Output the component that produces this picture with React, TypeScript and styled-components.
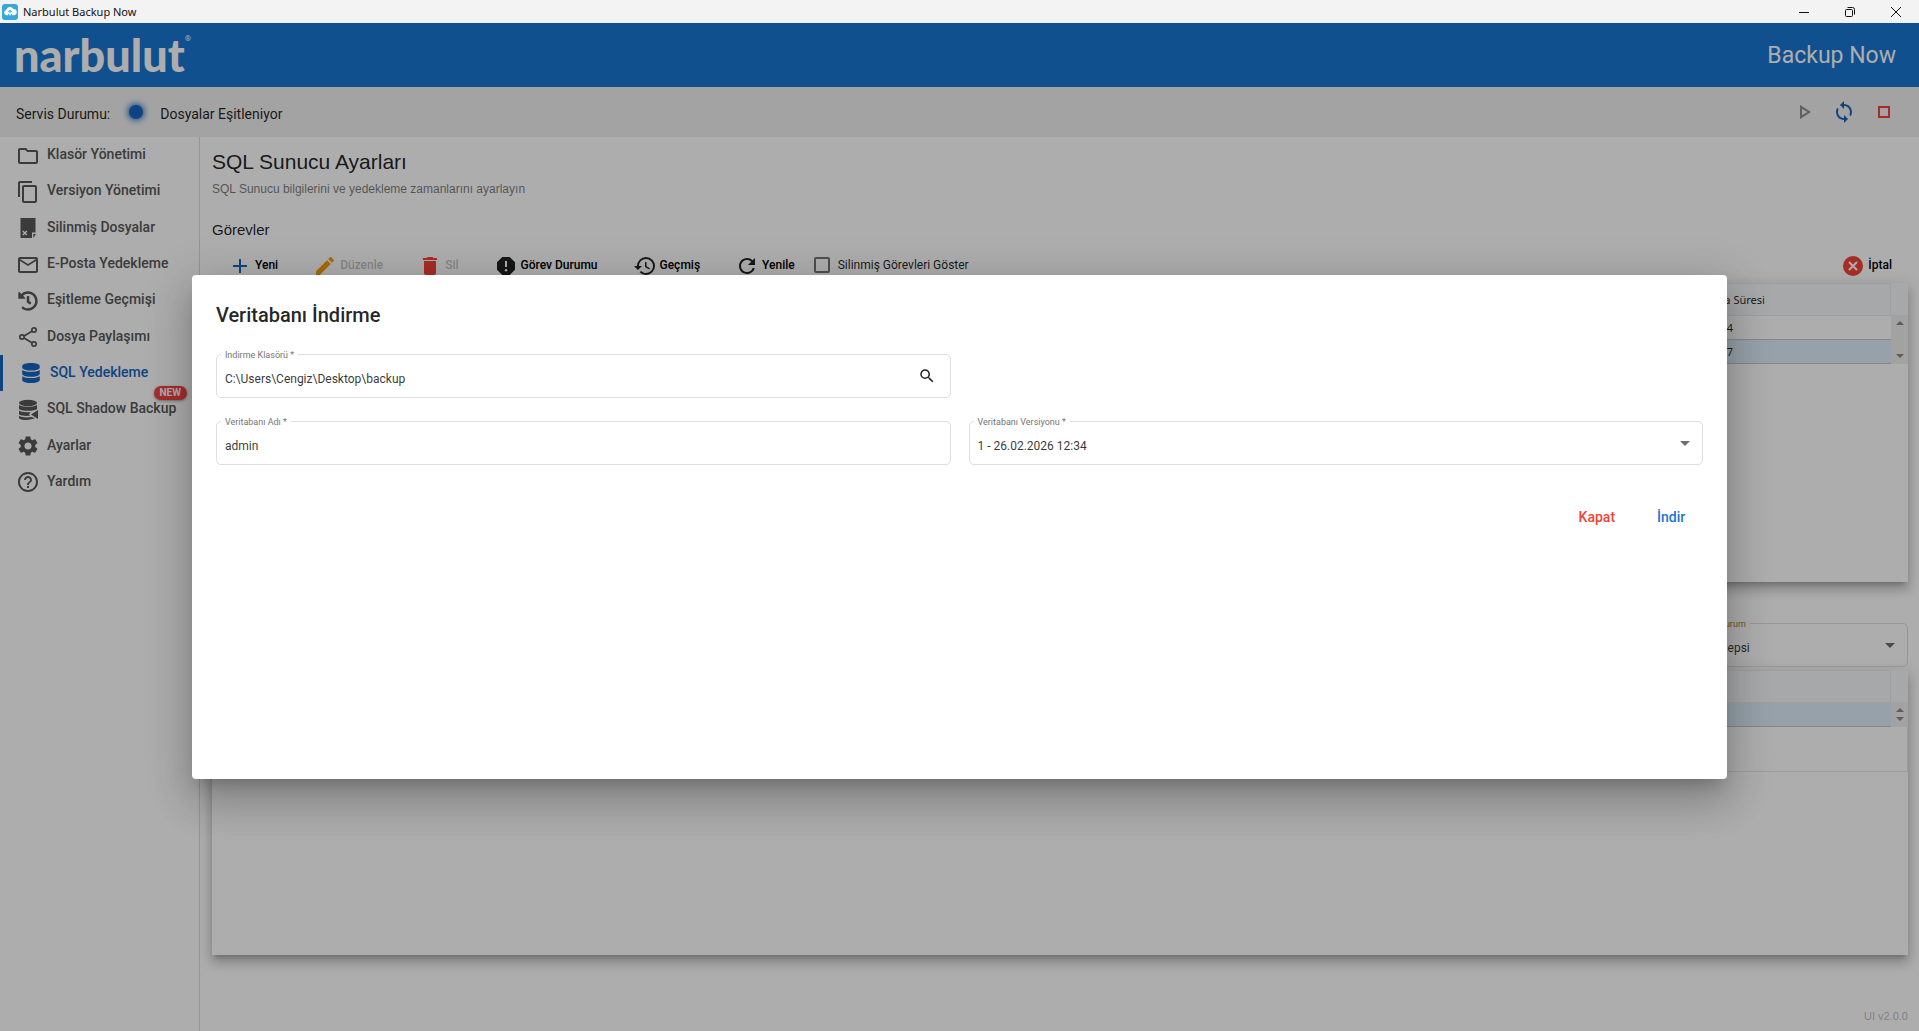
import React from "react";
import styled, { createGlobalStyle, css } from "styled-components";
import {
  MdAdd,
  MdArrowDropDown,
  MdContentCopy,
  MdDelete,
  MdEdit,
  MdHelpOutline,
  MdHistory,
  MdMailOutline,
  MdOutlineFolder,
  MdOutlinePlayArrow,
  MdOutlineStop,
  MdRefresh,
  MdSearch,
  MdSettings,
  MdSync,
} from "react-icons/md";
import { FaDatabase, FaHistory } from "react-icons/fa";

const GlobalStyle = createGlobalStyle`
  *, *::before, *::after { box-sizing: border-box; }
  body {
    margin: 0;
    font-family: Roboto, "Liberation Sans", sans-serif;
    font-size: 12px;
    color: rgba(0, 0, 0, 0.87);
    background: #fff;
  }
  button, input, select { font: inherit; color: inherit; }
  h1, h2, p, ul { margin: 0; padding: 0; }
`;

const Shell = styled.div`
  display: flex;
  flex-direction: column;
  height: 100vh;
  overflow: hidden;
`;

const TitleBar = styled.div`
  display: flex;
  align-items: center;
  flex: none;
  height: 23px;
  padding-left: 2px;
  background: #f3f3f3;
  color: #111;
  font: 11px/16px "Noto Sans", "Open Sans", sans-serif;
`;

const WindowTitle = styled.span`
  flex: 1;
  padding-left: 5px;
`;

const WindowButton = styled.button`
  display: grid;
  place-items: center;
  width: 46px;
  height: 20px;
  padding: 0;
  border: 0;
  background: none;
  color: #111;
`;

const AppArea = styled.div`
  position: relative;
  display: flex;
  flex: 1;
  flex-direction: column;
  min-height: 0;
`;

const Header = styled.header`
  display: flex;
  align-items: center;
  justify-content: space-between;
  flex: none;
  height: 64px;
  padding: 0 23px 0 14px;
  background: #1976d2;
  color: #fff;
`;

const Logo = styled.a`
  display: flex;
  align-items: flex-start;
  color: #fff;
  font: 900 45px/56px Lato, sans-serif;
  text-decoration: none;
`;

const Registered = styled.span`
  font: 8px/24px Roboto, sans-serif;
`;

const ProductName = styled.span`
  padding-top: 2px;
  font-size: 23px;
  line-height: 32px;
`;

const StatusBar = styled.div`
  display: flex;
  align-items: center;
  flex: none;
  height: 50px;
  padding: 0 23px 0 16px;
  background: #f0f0f0;
  font-size: 14px;
  line-height: 20px;
`;

const StatusDot = styled.span`
  width: 14px;
  height: 14px;
  margin: 0 17px 0 19px;
  border-radius: 50%;
  background: #1565c0;
  box-shadow: 0 0 6px 1px #1565c0;
`;

const StatusText = styled.span<{ $grow?: boolean }>`
  flex: ${(p) => (p.$grow ? 1 : "none")};
  padding-top: 4px;
`;

const StatusActions = styled.div`
  display: flex;
  gap: 16px;
`;

const IconButton = styled.button<{ $color: string }>`
  display: grid;
  place-items: center;
  padding: 0;
  border: 0;
  background: none;
  color: ${(p) => p.$color};
`;

const Body = styled.div`
  display: flex;
  flex: 1;
  min-height: 0;
`;

const Sidebar = styled.nav`
  flex: none;
  width: 200px;
  border-right: 1px solid #dcdcdc;
`;

const NavList = styled.ul`
  display: grid;
  grid-auto-rows: 1fr;
  min-height: 363px;
  list-style: none;
`;

const NavLink = styled.a<{ $active?: boolean }>`
  position: relative;
  display: flex;
  align-items: center;
  gap: 7px;
  height: 100%;
  padding: 0 0 2px 16px;
  color: #585858;
  font-size: 14px;
  font-weight: 500;
  line-height: 20px;
  text-decoration: none;
  white-space: nowrap;
  ${(p) =>
    p.$active &&
    css`
      border-left: 3px solid #1565c0;
      color: #1565c0;
    `}
`;

const NavIcon = styled.span`
  display: grid;
  place-items: center;
  flex: none;
  width: 24px;
  padding-top: 3px;
`;

const NewBadge = styled.span`
  position: absolute;
  top: -5px;
  right: 12px;
  padding: 0 6px;
  border-radius: 7px;
  background: #f44343;
  box-shadow: 0 1px 3px rgba(0, 0, 0, 0.4);
  color: #fff;
  font-size: 10px;
  font-weight: 700;
  line-height: 14px;
`;

const Main = styled.main`
  display: flex;
  flex: 1;
  flex-direction: column;
  min-width: 0;
  padding: 12px 11px 6px 12px;
`;

const PageTitle = styled.h1`
  font: 400 21px/26px "Liberation Sans", Arial, sans-serif;
`;

const PageHint = styled.p`
  margin-top: 6px;
  color: rgba(0, 0, 0, 0.54);
  font: 12px/16px "Liberation Sans", Arial, sans-serif;
`;

const SectionTitle = styled.h2`
  margin-top: 23px;
  font: 400 15px/20px "Liberation Sans", Arial, sans-serif;
`;

const Toolbar = styled.div`
  display: flex;
  align-items: center;
  gap: 3px;
  height: 36px;
  margin-top: 7px;
`;

const ToolButton = styled.button<{ $tint?: string }>`
  display: flex;
  align-items: center;
  gap: 3px;
  height: 36px;
  padding: 0 16px;
  border: 0;
  background: none;
  color: #000;
  font-size: 12px;
  font-weight: 500;
  &:disabled {
    color: rgba(0, 0, 0, 0.26);
  }
  svg {
    margin-top: 2px;
    color: ${(p) => p.$tint || "#222"};
  }
`;

const CheckLabel = styled.label`
  display: flex;
  flex: 1;
  align-items: center;
  gap: 8px;
  line-height: 20px;
`;

const CheckBox = styled.input`
  appearance: none;
  width: 16px;
  height: 16px;
  margin: 0;
  border: 2px solid #757575;
  border-radius: 2px;
`;

const Panel = styled.section<{ $height: number }>`
  flex: none;
  height: ${(p) => p.$height}px;
  background: #fff;
  box-shadow: 0 5px 5px -3px rgba(0, 0, 0, 0.2), 0 8px 10px 1px rgba(0, 0, 0, 0.14),
    0 3px 14px 2px rgba(0, 0, 0, 0.12);
`;

const GridFrame = styled.div`
  display: flex;
`;

const DataTable = styled.table`
  flex: 1;
  border-collapse: collapse;
  table-layout: fixed;
  font: 11px/16px "Noto Sans", "Open Sans", sans-serif;
`;

const HeadCell = styled.th`
  height: 32px;
  padding: 0 8px;
  border: 1px solid #e8eaec;
  background: #f6f8fa;
  font-weight: 400;
  text-align: left;
`;

const DataRow = styled.tr<{ $selected?: boolean }>`
  background: ${(p) => (p.$selected ? "#deeef9" : "#fff")};
`;

const Cell = styled.td`
  height: 24px;
  padding: 0 8px;
  border-bottom: 1px solid #c4c8cc;
`;

const WideCol = styled.col``;

const TimeCol = styled.col`
  width: 209px;
`;

const ScrollColumn = styled.div`
  display: flex;
  flex-direction: column;
  flex: none;
  width: 17px;
  padding-top: 32px;
  background: #f6f8fa;
`;

const ScrollTrack = styled.div`
  display: flex;
  flex: 1;
  flex-direction: column;
  align-items: center;
  justify-content: space-between;
  padding: 6px 0;
  background: #efefef;
`;

const Arrow = styled.span<{ $up?: boolean }>`
  border: 4px solid transparent;
  border-top-width: ${(p) => (p.$up ? 0 : 4)}px;
  border-bottom-width: ${(p) => (p.$up ? 4 : 0)}px;
  border-top-color: #8a8a8a;
  border-bottom-color: #8a8a8a;
  border-left-color: transparent;
  border-right-color: transparent;
`;

const EmptyDetail = styled.div`
  height: 45px;
  border: 1px solid #e6e6e6;
  border-top: 0;
`;

const FilterRow = styled.div`
  display: flex;
  justify-content: flex-end;
  margin: 41px 0 3px;
`;

const FilterSlot = styled.div`
  width: 198px;
`;

const Version = styled.footer`
  margin-top: auto;
  color: rgba(0, 0, 0, 0.3);
  font: 11px/18px "Liberation Sans", Arial, sans-serif;
  text-align: right;
`;

const FieldBox = styled.div`
  position: relative;
  display: flex;
  align-items: center;
  height: 44px;
  border: 1px solid #dedede;
  border-radius: 5px;
`;

const FieldLabel = styled.label<{ $color?: string }>`
  position: absolute;
  top: -6px;
  left: 4px;
  padding: 0 4px;
  background: #fff;
  color: ${(p) => p.$color || "#757575"};
  font-size: 9px;
  line-height: 12px;
`;

const fieldText = css`
  flex: 1;
  width: 100%;
  height: 42px;
  padding: 6px 8px 0;
  border: 0;
  outline: 0;
  background: transparent;
  color: rgba(0, 0, 0, 0.8);
  font-size: 12px;
`;

const TextInput = styled.input`
  ${fieldText}
`;

const SelectInput = styled.select`
  ${fieldText}
  appearance: none;
`;

const SearchButton = styled.button`
  display: grid;
  place-items: center;
  padding: 0;
  margin-right: 14px;
  border: 0;
  background: none;
`;

const SelectArrow = styled.span`
  position: absolute;
  right: 5px;
  display: grid;
  color: #6f6f6f;
  pointer-events: none;
`;

const Backdrop = styled.div`
  position: absolute;
  inset: 0;
  display: grid;
  place-items: center;
  background: rgba(0, 0, 0, 0.32);
`;

const Dialog = styled.div`
  width: 80%;
  height: 50%;
  padding: 24px;
  border-radius: 4px;
  background: #fff;
  box-shadow: 0 11px 15px -7px rgba(0, 0, 0, 0.2), 0 24px 38px 3px rgba(0, 0, 0, 0.14),
    0 9px 46px 8px rgba(0, 0, 0, 0.12);
`;

const DialogTitle = styled.h2`
  margin-bottom: 23px;
  font-size: 20px;
  font-weight: 500;
  line-height: 32px;
`;

const FieldGrid = styled.form`
  display: grid;
  grid-template-columns: 1fr 1fr;
  gap: 23px 18px;
`;

const FullRow = styled.div`
  display: grid;
  grid-column: 1 / -1;
  grid-template-columns: subgrid;
`;

const DialogActions = styled.div`
  display: flex;
  justify-content: flex-end;
  gap: 8px;
  margin-top: 34px;
`;

const DialogButton = styled.button<{ $color: string }>`
  min-width: 64px;
  height: 36px;
  padding: 0 16px;
  border: 0;
  background: none;
  color: ${(p) => p.$color};
  font-size: 14px;
  font-weight: 500;
`;

const AppIcon = () => (
  <svg width="16" height="16" viewBox="0 0 16 16">
    <rect width="16" height="16" rx="3" fill="#35a9dc" />
    <path
      d="M4.6 11.2a2.7 2.7 0 0 1-.5-5.3A3.9 3.9 0 0 1 11.300 5a3.100 3.100 0 0 1 .6 6.200H10V9.500L8 11.800 6 9.600v1.600Z"
      fill="#fff"
    />
    <path d="M6.200 8.200 8 6.200l1.800 2M8 6.400v3" stroke="#35a9dc" strokeWidth="1" fill="none" />
  </svg>
);

const DeletedFileIcon = () => (
  <svg width="24" height="24" viewBox="0 0 24 24">
    <path d="M4.500 2h15v14.500H16V22H4.500Z" fill="currentColor" />
    <path d="M17.300 22v-4h2.700Z" fill="currentColor" />
    <path d="m6.800 15 4 4m0-4-4 4" stroke="#fff" strokeWidth="1.400" />
  </svg>
);

const ShareIcon = () => (
  <svg width="24" height="24" viewBox="0 0 24 24" fill="none" stroke="currentColor" strokeWidth="1.700">
    <circle cx="18" cy="5" r="2.200" />
    <circle cx="6" cy="12" r="2.200" />
    <circle cx="18" cy="19" r="2.200" />
    <path d="m8 10.900 8-4.700M8 13.100l8 4.700" />
  </svg>
);

const ShadowDatabaseIcon = () => (
  <svg width="24" height="24" viewBox="0 0 24 24" fill="currentColor">
    <ellipse cx="12" cy="5" rx="9" ry="3.200" />
    <path d="M3 6.800c2 2.600 16 2.600 18 0v4.200c-2 2.400-16 2.400-18 0Z" />
    <path d="M3 12.600c1.700 1.700 7.500 2 11.500 1.500l-1.500 2.400 1.200 1.300c-5 .4-10-.2-11.200-1.600Z" />
    <path d="M3 17.700c2 1.700 7.500 2 12 1.400l4 1C15 22.700 3.600 22.400 3 19.900Z" />
    <path d="m15 16.500 7-4.500v9Z" />
  </svg>
);

const AlertOctagonIcon = () => (
  <svg width="24" height="24" viewBox="0 0 24 24">
    <path d="M8.300 3h7.400L21 8.300v7.400L15.700 21H8.300L3 15.700V8.300Z" fill="currentColor" />
    <path d="M12 7v6" stroke="#fff" strokeWidth="2" />
    <circle cx="12" cy="16.200" r="1.200" fill="#fff" />
  </svg>
);

const CancelIcon = () => (
  <svg width="24" height="24" viewBox="0 0 24 24">
    <circle cx="12" cy="12" r="10" fill="#f44336" />
    <path d="m8 8 8 8m0-8-8 8" stroke="#fff" strokeWidth="2" />
  </svg>
);

const navItems = [
  { label: "Klasör Yönetimi", icon: <MdOutlineFolder size={24} /> },
  { label: "Versiyon Yönetimi", icon: <MdContentCopy size={24} /> },
  { label: "Silinmiş Dosyalar", icon: <DeletedFileIcon /> },
  { label: "E-Posta Yedekleme", icon: <MdMailOutline size={24} /> },
  { label: "Eşitleme Geçmişi", icon: <FaHistory size={20} /> },
  { label: "Dosya Paylaşımı", icon: <ShareIcon /> },
  { label: "SQL Yedekleme", icon: <FaDatabase size={20} />, active: true },
  { label: "SQL Shadow Backup", icon: <ShadowDatabaseIcon />, badge: "NEW" },
  { label: "Ayarlar", icon: <MdSettings size={24} /> },
  { label: "Yardım", icon: <MdHelpOutline size={24} /> },
];

function Scroller() {
  return (
    <ScrollColumn>
      <ScrollTrack>
        <Arrow $up />
        <Arrow />
      </ScrollTrack>
    </ScrollColumn>
  );
}

function SelectField(props: { id: string; label: string; value: string; labelColor?: string }) {
  return (
    <FieldBox>
      <FieldLabel htmlFor={props.id} $color={props.labelColor}>
        {props.label}
      </FieldLabel>
      <SelectInput id={props.id}>
        <option>{props.value}</option>
      </SelectInput>
      <SelectArrow>
        <MdArrowDropDown size={24} />
      </SelectArrow>
    </FieldBox>
  );
}

function TextField(props: { id: string; label: string; value: string; children?: React.ReactNode }) {
  return (
    <FieldBox>
      <FieldLabel htmlFor={props.id}>{props.label}</FieldLabel>
      <TextInput id={props.id} defaultValue={props.value} />
      {props.children}
    </FieldBox>
  );
}

function DownloadDialog() {
  return (
    <Backdrop>
      <Dialog role="dialog" aria-labelledby="dialog-title">
        <DialogTitle id="dialog-title">Veritabanı İndirme</DialogTitle>
        <FieldGrid>
          <FullRow>
            <TextField id="folder" label="Indirme Klasörü *" value="C:\Users\Cengiz\Desktop\backup">
              <SearchButton type="button">
                <MdSearch size={18} />
              </SearchButton>
            </TextField>
          </FullRow>
          <TextField id="database" label="Veritabanı Adı *" value="admin" />
          <SelectField id="version" label="Veritabanı Versiyonu *" value="1 - 26.02.2026 12:34" />
        </FieldGrid>
        <DialogActions>
          <DialogButton $color="#f44336">Kapat</DialogButton>
          <DialogButton $color="#1976d2">İndir</DialogButton>
        </DialogActions>
      </Dialog>
    </Backdrop>
  );
}

export default function App() {
  return (
    <Shell>
      <GlobalStyle />
      <TitleBar>
        <AppIcon />
        <WindowTitle>Narbulut Backup Now</WindowTitle>
        <WindowButton>
          <svg width="10" height="10" viewBox="0 0 10 10" stroke="currentColor">
            <path d="M0 5.500h10" />
          </svg>
        </WindowButton>
        <WindowButton>
          <svg width="10" height="10" viewBox="0 0 10 10" stroke="currentColor" fill="none">
            <rect x=".5" y="2.500" width="7" height="7" rx="1" />
            <path d="M2.500.5h5a2 2 0 0 1 2 2v5" />
          </svg>
        </WindowButton>
        <WindowButton>
          <svg width="10" height="10" viewBox="0 0 10 10" stroke="currentColor">
            <path d="m0 0 10 10M10 0 0 10" />
          </svg>
        </WindowButton>
      </TitleBar>
      <AppArea>
        <Header>
          <Logo href="#">
            narbulut<Registered>®</Registered>
          </Logo>
          <ProductName>Backup Now</ProductName>
        </Header>
        <StatusBar>
          <StatusText>Servis Durumu:</StatusText>
          <StatusDot />
          <StatusText $grow>Dosyalar Eşitleniyor</StatusText>
          <StatusActions>
            <IconButton $color="#8f8f8f">
              <MdOutlinePlayArrow size={24} />
            </IconButton>
            <IconButton $color="#1565c0">
              <MdSync size={24} />
            </IconButton>
            <IconButton $color="#f44336">
              <MdOutlineStop size={24} />
            </IconButton>
          </StatusActions>
        </StatusBar>
        <Body>
          <Sidebar>
            <NavList>
              {navItems.map((item) => (
                <li key={item.label}>
                  <NavLink href="#" $active={item.active}>
                    <NavIcon>{item.icon}</NavIcon>
                    {item.label}
                    {item.badge && <NewBadge>{item.badge}</NewBadge>}
                  </NavLink>
                </li>
              ))}
            </NavList>
          </Sidebar>
          <Main>
            <PageTitle>SQL Sunucu Ayarları</PageTitle>
            <PageHint>SQL Sunucu bilgilerini ve yedekleme zamanlarını ayarlayın</PageHint>
            <SectionTitle>Görevler</SectionTitle>
            <Toolbar>
              <ToolButton $tint="#1565c0">
                <MdAdd size={24} />
                Yeni
              </ToolButton>
              <ToolButton $tint="#f59e0b" disabled>
                <MdEdit size={24} />
                Düzenle
              </ToolButton>
              <ToolButton $tint="#f44336" disabled>
                <MdDelete size={24} />
                Sil
              </ToolButton>
              <ToolButton>
                <AlertOctagonIcon />
                Görev Durumu
              </ToolButton>
              <ToolButton>
                <MdHistory size={24} />
                Geçmiş
              </ToolButton>
              <ToolButton>
                <MdRefresh size={24} />
                Yenile
              </ToolButton>
              <CheckLabel>
                <CheckBox type="checkbox" />
                Silinmiş Görevleri Göster
              </CheckLabel>
              <ToolButton>
                <CancelIcon />
                İptal
              </ToolButton>
            </Toolbar>
            <Panel $height={299}>
              <GridFrame>
                <DataTable>
                  <colgroup>
                    <WideCol />
                    <TimeCol />
                  </colgroup>
                  <thead>
                    <tr>
                      <HeadCell />
                      <HeadCell>Çalışma Süresi</HeadCell>
                    </tr>
                  </thead>
                  <tbody>
                    <DataRow>
                      <Cell />
                      <Cell>00:00:04</Cell>
                    </DataRow>
                    <DataRow $selected>
                      <Cell />
                      <Cell>00:00:07</Cell>
                    </DataRow>
                  </tbody>
                </DataTable>
                <Scroller />
              </GridFrame>
            </Panel>
            <FilterRow>
              <FilterSlot>
                <SelectField id="state" label="Durum" value="Hepsi" labelColor="#a08040" />
              </FilterSlot>
            </FilterRow>
            <Panel $height={285}>
              <GridFrame>
                <DataTable>
                  <thead>
                    <tr>
                      <HeadCell />
                    </tr>
                  </thead>
                  <tbody>
                    <DataRow $selected>
                      <Cell />
                    </DataRow>
                  </tbody>
                </DataTable>
                <Scroller />
              </GridFrame>
              <EmptyDetail />
            </Panel>
            <Version>UI v2.0.0</Version>
          </Main>
        </Body>
        <DownloadDialog />
      </AppArea>
    </Shell>
  );
}
